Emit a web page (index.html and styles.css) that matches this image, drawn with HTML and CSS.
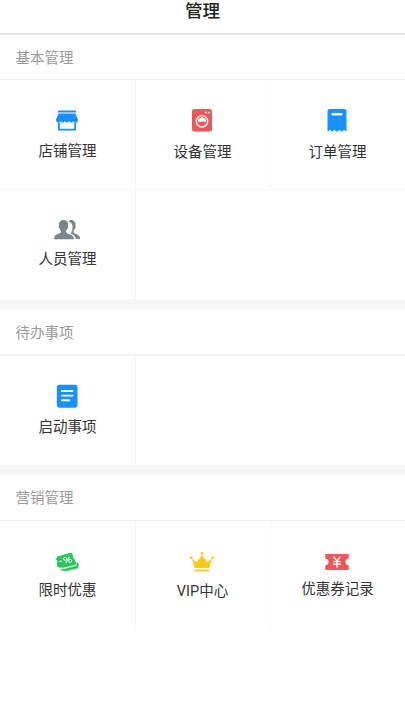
FILE: index.html
```html
<!DOCTYPE html>
<html lang="zh-CN">
<head>
<meta charset="utf-8">
<title>管理</title>
<link rel="stylesheet" href="styles.css">
</head>
<body>
<header class="header">管理</header>
<main>
<section class="section basic">
  <h2 class="title">基本管理</h2>
  <div class="grid">
    <a class="cell shop"><svg width="24" height="24" viewBox="0 0 24 24" fill="#1890ff"><path d="M3 1.600h18v1.800H3zM3.600 4.400h16.800L23 10.200c.2 2.200-1 3.400-2.400 3.400-1.200 0-1.900-.7-2.200-1.500-.5 1.100-1.300 1.500-2.100 1.500-1 0-1.800-.6-2.100-1.500-.4 1.100-1.200 1.500-2.200 1.500s-1.800-.5-2.200-1.500c-.4 1-1.200 1.500-2.100 1.500-1 0-1.700-.5-2.100-1.500-.5 1.100-1.200 1.500-2.200 1.500C2 13.600.8 12.200 1 10.200z"/><path d="M3 13.500h1.800v6.300h14.400v-6.300H21v8.100H3z"/></svg><span>店铺管理</span></a>
    <a class="cell washer"><svg width="24" height="24" viewBox="0 0 24 24"><rect x="2" y="1" width="20" height="22.500" rx="2.500" fill="#f05659"/><circle cx="12" cy="13.300" r="5.700" fill="none" stroke="#fff" stroke-width="1.400"/><path d="M8 13.600a4 4 0 0 1 8 0c-1.400.8-2.300-.5-4-.1s-2.700.8-4 .1z" fill="#fff"/><circle cx="15.700" cy="4.500" r="1" fill="#fff"/><circle cx="18.900" cy="4.500" r="1" fill="#fff"/></svg><span>设备管理</span></a>
    <a class="cell order"><svg width="24" height="24" viewBox="0 0 24 24"><path d="M4.500 1h15a2 2 0 0 1 2 2v20.300h-1l-1.500-1.500-1.800 1.600h-.8l-1.900-1.600-1.800 1.600h-1.400l-1.800-1.600-1.900 1.600h-.8L5 21.800l-1.500 1.500h-1V3a2 2 0 0 1 2-2z" fill="#1890ff"/><rect x="6.500" y="5" width="11" height="2.400" rx=".8" fill="#fff"/></svg><span>订单管理</span></a>
    <a class="cell people"><svg width="28" height="24" viewBox="0 0 28 24" fill="#7b868c"><path d="M15.600 2.400c1-1.400 2.600-1.700 4-1.200 2.500.8 3.300 3.200 2.800 5.700.8.600.4 2.100-.4 2.400-.4 1.400-1.400 2.100-1.500 3-.2 1.900 1.600 2.300 3.500 3.200 2.200 1 3 2.100 3 4.600h-4.200c-.3-3.300-2.500-4.300-5.200-5.500 1.500-2 1.900-3.800 1.800-5.500.8-2.900-.8-5.700-3.800-6.700z"/><path d="M1 20.200c0-2.600.9-3.900 3.300-4.900 2-.8 3.900-1.300 3.700-3.100-.1-1-1-1.500-1.500-3-.9-.3-1.300-1.800-.5-2.500C5.500 3.300 7.200 1 10.500 1S15.600 3.300 15 6.700c.8.700.4 2.200-.5 2.500-.4 1.500-1.400 2-1.500 3-.2 1.800 1.700 2.300 3.700 3.100 2.400 1 4.300 2.300 4.300 4.900z"/></svg><span>人员管理</span></a>
    <div class="cell blank"></div>
  </div>
</section>
<section class="section">
  <h2 class="title">待办事项</h2>
  <div class="grid">
    <a class="cell launch"><svg width="24" height="24" viewBox="0 0 24 24"><rect x="1.800" y=".7" width="20.700" height="23" rx="2.400" fill="#1890ff"/><path d="M7 7h10.500M7 11.600h10.500M7 16.200h7.200" stroke="#fff" stroke-width="1.900" stroke-linecap="round"/></svg><span>启动事项</span></a>
    <div class="cell blank"></div>
  </div>
</section>
<section class="section last">
  <h2 class="title">营销管理</h2>
  <div class="grid">
    <a class="cell offer"><svg width="24" height="20" viewBox="0 0 24 20"><path d="M2.600 4.200 14.800.9q2-.4 2.700 1.200l.6 2a2 2 0 0 0 1.400 2.600l1.700 4.200q.5 1.500-1 2L8 15.800 3.800 15.400q-1.300-.1-1.600-1.400L1.700 11A2 2 0 0 0 .6 7.500z" fill="#2ac65b"/><path d="m5.300 17 3.500.3L21.500 13.800l.8-3q1.600.5 1.400 2l-.5 2.500q-.2.900-1.200 1.100L11 19q-4 .5-5.700-2z" fill="#2ac65b" stroke="#2ac65b" stroke-width=".3"/><g fill="none" stroke="#fff"><path d="M4.600 9.400h2.500M10.800 11l3.600-6.200" stroke-width="1.100"/><circle cx="10.200" cy="6.800" r="1.500"/><circle cx="15.200" cy="8.800" r="1.500"/></g></svg><span>限时优惠</span></a>
    <a class="cell vip"><svg width="26" height="22" viewBox="0 0 26 22" fill="#fccb14"><path d="m2.800 7.500 4.700 3.800L13 4l5.500 7.300 4.700-3.800-2.900 9.500H5.700zM5.700 18.600h14.600v2H5.700z"/><circle cx="13" cy="2.300" r="1.500"/><circle cx="2.300" cy="6.700" r="1.400"/><circle cx="23.700" cy="6.700" r="1.400"/></svg><span>VIP中心</span></a>
    <a class="cell ticket"><svg width="24" height="18" viewBox="0 0 24 18"><path d="M.3 1h23.400v4.800a3.200 3.200 0 0 0 0 6.400V17H.3v-4.800a3.200 3.200 0 0 0 0-6.400z" fill="#f05659"/><path d="m8.600 3.600 3.400 4.600 3.400-4.600M12 8.200v6.300M8.300 8.600h7.400M8.300 11.300h7.400" fill="none" stroke="#fff" stroke-width="1.400"/></svg><span>优惠券记录</span></a>
  </div>
</section>
</main>
</body>
</html>
```
FILE: styles.css
```css
* { box-sizing: border-box; }
body {
  margin: 0;
  background: #fff;
  color: #333;
  font-family: Roboto, "Noto Sans CJK SC", sans-serif;
}
.header {
  height: 35px;
  border-bottom: 2px solid #e3e3e3;
  color: #222;
  font-size: 17.5px;
  font-weight: 500;
  line-height: 23px;
  text-align: center;
}
.section { border-bottom: 10px solid #f5f5f5; }
.section.basic { border-bottom-width: 11px; }
.section.last { border-bottom: 0; }
.title {
  height: 46px;
  margin: 0;
  padding-left: 15.5px;
  border-bottom: 2px solid #f3f3f3;
  color: #999;
  font-size: 14.5px;
  font-weight: 400;
  line-height: 47px;
}
.basic .title { height: 45px; border-bottom: 1px solid #efefef; }
.last .title { border-bottom: 1px solid #eee; line-height: 48px; }
.grid {
  display: grid;
  grid-template-columns: repeat(3, 135px);
  grid-auto-rows: 109px;
}
.basic .grid { grid-template-rows: 110px 109px; }
.cell {
  display: flex;
  flex-direction: column;
  align-items: center;
  padding-right: 2px;
  border-left: 1px solid #f7f7f7;
  font-size: 14.5px;
  line-height: 20px;
}
.cell:nth-child(3n + 1) { border-left-color: transparent; }
.cell svg { display: block; flex: none; }
.cell span { margin-top: 9px; padding-left: 1px; white-space: nowrap; }
.blank { grid-column: span 2; }
.shop, .washer, .order { padding-top: 28px; border-bottom: 1px solid #f7f7f7; }
.shop { padding-top: 29px; }
.washer span, .order span { margin-top: 11px; }
.people { padding-top: 29px; }
.people span { margin-top: 7px; }
.launch { padding-top: 28px; }
.launch span { margin-top: 10px; }
.offer { padding-top: 31px; }
.vip { padding-top: 30px; }
.ticket { padding-top: 32px; }
```
